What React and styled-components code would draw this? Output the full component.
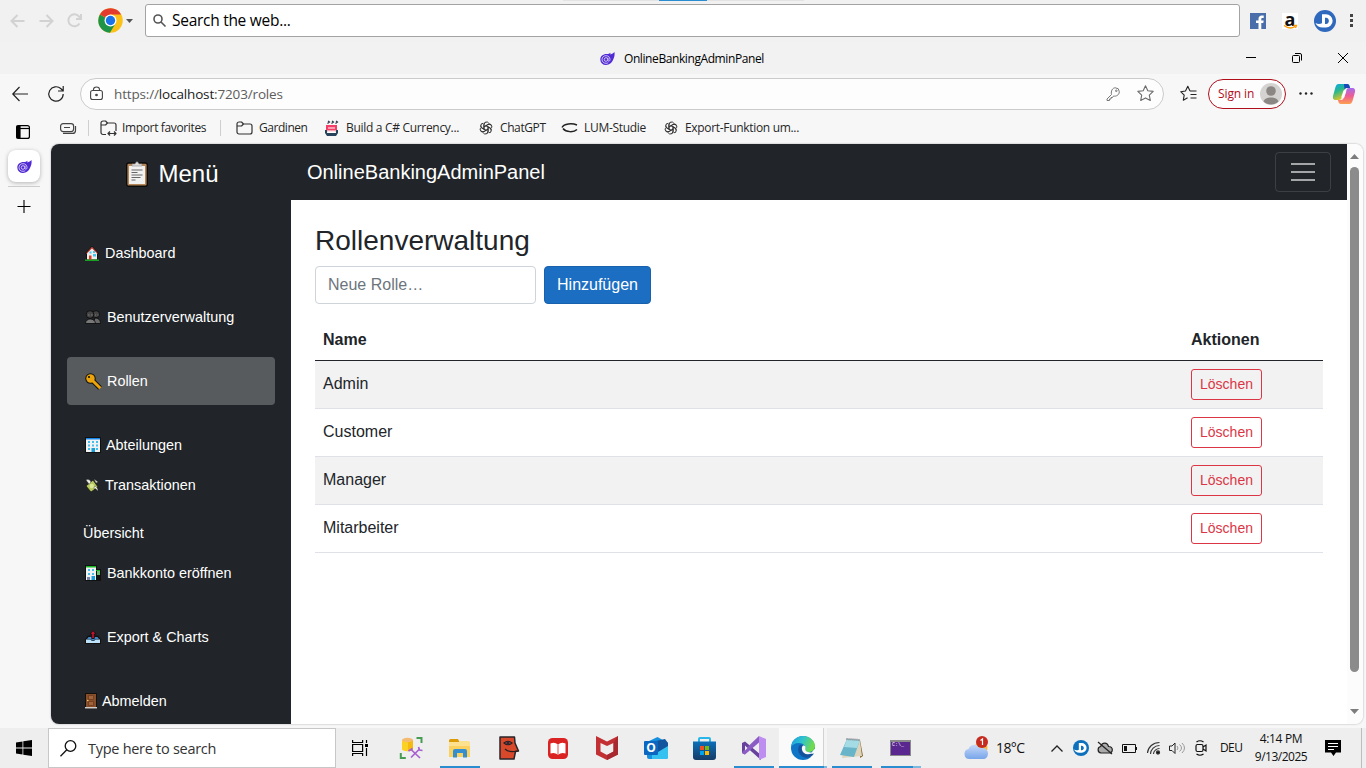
import React from "react";
import styled, { createGlobalStyle, css } from "styled-components";

const UI = '"Open Sans", "Noto Sans", sans-serif';
const WEB = '"Liberation Sans", Arial, sans-serif';

const GlobalStyle = createGlobalStyle`
  *, *::before, *::after { box-sizing: border-box; }
  html, body { margin: 0; padding: 0; overflow: hidden; }
  svg { display: block; flex: none; overflow: visible; }
`;

const Screen = styled.div`
  width: 1366px;
  height: 768px;
  display: flex;
  flex-direction: column;
  overflow: hidden;
  background: #f7f7f7;
  font-family: ${UI};
  color: #1b1b1b;
`;

const Label = styled.span`
  display: block;
  flex: none;
  white-space: nowrap;
  width: ${(p) => (p.$w ? `${p.$w}px` : "auto")};
  margin-left: ${(p) => p.$ml || 0}px;
  font-size: ${(p) => p.$size || 12}px;
  letter-spacing: ${(p) => p.$ls || 0}px;
  color: ${(p) => p.$color || "inherit"};
  line-height: 20px;
`;

const TrayText = styled(Label)`
  align-self: center;
`;

const Slot = styled.div`
  flex: none;
  width: ${(p) => p.$w}px;
  height: 100%;
  display: flex;
  align-items: center;
  justify-content: center;
`;

const Spacer = styled.div`
  flex: 1;
`;

/* Search toolbar */

const SearchToolbar = styled.header`
  position: relative;
  flex: none;
  height: 42px;
  display: flex;
  align-items: center;
  padding: 0 0 1px 4px;
  background: #f1f1f1;
`;

const DockHandle = styled.div`
  position: absolute;
  left: 563px;
  top: 0;
  width: 241px;
  height: 1px;
  background: linear-gradient(90deg, #e3e3e3 96px, #2a8dcf 96px, #2a8dcf 144px, #e3e3e3 144px);
`;

const EngineSlot = styled.div`
  flex: none;
  width: 47px;
  padding-left: 10px;
  display: flex;
  align-items: center;
  gap: 3px;
`;

const WebSearch = styled.div`
  flex: none;
  width: 1095px;
  height: 33px;
  margin-left: 10px;
  padding: 0 0 1px 7px;
  display: flex;
  align-items: center;
  background: #fff;
  border: 1px solid #a3a3a3;
  border-radius: 3px;
  color: #000;
`;

/* Browser chrome */

const TitleBar = styled.div`
  flex: none;
  height: 32px;
  display: flex;
  align-items: center;
  padding-left: 600px;
  background: #f2f2f2;
  color: #000;
`;

const TitleText = styled(Label)`
  padding-top: 2px;
`;

const AddressRow = styled.div`
  flex: none;
  height: 38px;
  display: flex;
  align-items: center;
  padding: 1px 0 0 2px;
`;

const AddressField = styled.div`
  flex: none;
  width: 1084px;
  height: 32px;
  margin-left: 6px;
  padding: 0 1px 0 9px;
  display: flex;
  align-items: center;
  border: 1px solid #cbcbcb;
  border-radius: 16px;
  background: #fdfdfd;
  color: #5c5c5c;
  b { font-weight: 400; color: #1b1b1b; }
`;

const FavoritesButton = styled(Slot)`
  padding-left: 7px;
`;

const SignIn = styled.div`
  flex: none;
  width: 78px;
  height: 30px;
  margin-left: 3px;
  padding: 0 3px 0 9px;
  display: flex;
  align-items: center;
  justify-content: space-between;
  border: 1px solid #b10e1c;
  border-radius: 15px;
  background: #fdfdfd;
  color: #b10e1c;
`;

const Body = styled.div`
  flex: 1;
  min-height: 0;
  display: flex;
`;

const TabRail = styled.nav`
  flex: none;
  width: 51px;
  padding: 13px 3px 0 0;
  display: flex;
  flex-direction: column;
  align-items: center;
`;

const TabMenu = styled.div`
  padding-right: 2px;
`;

const ActiveTab = styled.div`
  width: 32px;
  height: 32px;
  margin: 11px 0 4px;
  display: flex;
  align-items: center;
  justify-content: center;
  border-radius: 8px;
  background: #fff;
  box-shadow: 0 1px 4px rgba(0, 0, 0, 0.28);
`;

const RailRule = styled.div`
  width: 32px;
  height: 1px;
  margin-bottom: 13px;
  background: #cdcdcd;
`;

const BrowserPane = styled.div`
  flex: none;
  width: 1312px;
  display: flex;
  flex-direction: column;
`;

const Favorites = styled.div`
  flex: none;
  height: 32px;
  padding-left: 9px;
  display: flex;
  align-items: center;
  color: #262626;
`;

const FavRule = styled.i`
  flex: none;
  width: 1px;
  height: 16px;
  margin: 0 ${(p) => p.$r}px 0 ${(p) => p.$l}px;
  background: #cfcfcf;
`;

const FavIcon = styled.span`
  flex: none;
  margin: 0 5px 0 ${(p) => p.$ml || 0}px;
`;

/* Web page */

const Viewport = styled.div`
  flex: none;
  height: 580px;
  display: flex;
  overflow: hidden;
  border-radius: 8px;
  background: #fff;
  box-shadow: 0 0 2px rgba(0, 0, 0, 0.35);
  font-family: ${WEB};
  color: #212529;
`;

const Sidebar = styled.aside`
  flex: none;
  width: 240px;
  padding: 0 16px;
  background: #212529;
  color: #fff;
`;

const MenuTitle = styled.div`
  height: 60px;
  margin-bottom: 25px;
  padding-left: 3px;
  display: flex;
  justify-content: center;
  align-items: center;
  gap: 10px;
  font-size: 24px;
  color: #fff;
`;

const NavItem = styled.a`
  height: ${(p) => p.$h || 48}px;
  margin-top: ${(p) => p.$mt || 0}px;
  padding-left: ${(p) => (p.$plain ? 16 : 18)}px;
  display: flex;
  align-items: center;
  gap: ${(p) => p.$gap || 6}px;
  border-radius: 4px;
  font-size: 14.4px;
  color: #fff;
  ${(p) => p.$active && css`background: rgba(255, 255, 255, 0.25);`}
`;

const Main = styled.main`
  flex: 1;
`;

const Navbar = styled.div`
  height: 56px;
  padding: 0 16px;
  display: flex;
  align-items: center;
  justify-content: space-between;
  background: #212529;
  color: #fff;
  font-size: 20px;
`;

const Toggler = styled.button`
  width: 56px;
  height: 40px;
  padding: 0;
  display: flex;
  align-items: center;
  justify-content: center;
  border: 1px solid rgba(255, 255, 255, 0.12);
  border-radius: 4px;
  background: none;
`;

const Content = styled.section`
  padding: 24px;
`;

const Heading = styled.h3`
  margin: 0 0 8px;
  font-size: 28px;
  font-weight: 400;
  line-height: 34px;
`;

const RoleForm = styled.div`
  display: flex;
  gap: 8px;
  margin-bottom: 16px;
`;

const RoleInput = styled.input`
  width: 221px;
  height: 38px;
  padding: 0 12px;
  border: 1px solid #ced4da;
  border-radius: 4px;
  font: 16px ${WEB};
  &::placeholder { color: #6c757d; opacity: 1; }
`;

const AddButton = styled.button`
  width: 107px;
  height: 38px;
  padding: 0;
  border: 1px solid #1861ac;
  border-radius: 4px;
  background: #1b6ec2;
  color: #fff;
  font: 16px ${WEB};
`;

const RoleTable = styled.div`
  width: 1008px;
`;

const RoleRow = styled.div`
  height: ${(p) => (p.$head ? 41 : 48)}px;
  display: grid;
  grid-template-columns: 868px 140px;
  align-items: center;
  padding-bottom: ${(p) => (p.$head ? 1 : 0)}px;
  border-bottom: 1px solid ${(p) => (p.$head ? "#212529" : "#dee2e6")};
  background: ${(p) => (p.$striped ? "#f2f2f2" : "#fff")};
  font-weight: ${(p) => (p.$head ? 700 : 400)};
`;

const Cell = styled.div`
  padding: 0 8px;
  font-size: 16px;
  line-height: 24px;
`;

const RoleName = styled(Cell)`
  padding-bottom: 2px;
`;

const DeleteButton = styled.button`
  display: block;
  width: 71px;
  height: 31px;
  padding: 0 0 2px;
  border: 1px solid #dc3545;
  border-radius: 3px;
  background: transparent;
  color: #dc3545;
  font: 14px ${WEB};
`;

const ScrollTrack = styled.div`
  flex: none;
  width: 16px;
  padding: 10px 1px 10px 0;
  display: flex;
  flex-direction: column;
  align-items: center;
  background: #fcfcfc;
`;

const ScrollThumb = styled.div`
  width: 9px;
  height: 505px;
  margin: 8px 0 auto;
  border-radius: 5px;
  background: #8b8b8b;
`;

/* Taskbar */

const Taskbar = styled.footer`
  flex: none;
  height: 40px;
  display: flex;
  align-items: stretch;
  background: #eeeeee;
  color: #111;
`;

const TaskSearch = styled.div`
  flex: none;
  width: 288px;
  padding-left: 11px;
  display: flex;
  align-items: center;
  gap: 11px;
  border: 1px solid #c7c7c7;
  background: #fff;
  color: #333;
`;

const SearchHint = styled(Label)`
  padding-top: 2px;
`;

const TaskButton = styled.div`
  flex: none;
  width: ${(p) => p.$w || 49}px;
  padding-right: ${(p) => p.$pr || 0}px;
  display: flex;
  align-items: center;
  justify-content: center;
  background: ${(p) => (p.$active ? "linear-gradient(90deg, #eee 1px, #fafafa 1px, #fafafa 45px, #d2d2d2 45px, #d2d2d2 46px, #f4f4f4 46px)" : "transparent")};
  position: relative;
  ${(p) => p.$running && css`
    &::after {
      content: "";
      position: absolute;
      bottom: 0;
      left: ${p.$active ? 1 : 4.5}px;
      width: ${p.$stack ? p.$stack : 40}px;
      height: 2px;
      background: ${p.$stack ? `linear-gradient(90deg, #2a8dcf ${p.$split}px, #7db9df 0)` : "#2a8dcf"};
    }
  `}
`;

const Clock = styled.div`
  flex: none;
  width: 66px;
  display: flex;
  flex-direction: column;
  align-items: center;
  padding-top: 2px;
  > span { line-height: 18px; }
`;

const DesktopEdge = styled.div`
  width: 5px;
  border-left: 1px solid #bdbdbd;
`;

/* Drawings */

const Svg = ({ w, h = w, vb, children, ...rest }) => (
  <svg width={w} height={h} viewBox={vb || `0 0 ${w} ${h}`} fill="none" {...rest}>{children}</svg>
);

const Arrow = ({ flip }) => (
  <Svg w={16} stroke="#d2d2d2" strokeWidth="2">
    <path d={flip ? "M1.5 8H14M8.5 2l6 6-6 6" : "M14.5 8H2M7.5 2l-6 6 6 6"} />
  </Svg>
);

const Chrome = () => (
  <Svg w={25} vb="0 0 48 48">
    <circle cx="24" cy="24" r="23.500" fill="#fbc116" />
    <path d="M24 24 L3.600 12.300 A23.500 23.500 0 0 0 23 47.500 L34 29.500z" fill="#1e9449" />
    <path d="M3.600 12.300A23.500 23.500 0 0 1 44.400 12.500H24L18 20z" fill="#e33b2e" />
    <circle cx="24" cy="24" r="11.500" fill="#fff" />
    <circle cx="24" cy="24" r="9" fill="#1a73e8" />
  </Svg>
);

const Facebook = () => (
  <Svg w={16}>
    <path d="M0 0h16v16H0z" fill="#4a6ea9" />
    <path d="M8.500 16v-6H6V7.500h2.500V6c0-2.300 1.200-3.500 3.300-3.500h1.900v2.600h-1.300c-.9 0-1.100.4-1.100 1.200v1.200h2.400l-.4 2.500h-2v6z" fill="#fff" />
  </Svg>
);

const AmazonTile = styled.div`
  width: 16px;
  height: 16px;
  display: flex;
  flex-direction: column;
  align-items: center;
  background: #fff;
  font: 700 18px/12px "Open Sans", sans-serif;
  color: #111;
`;

const Amazon = () => (
  <AmazonTile>
    a
    <Svg w={14} h={4}><path d="M1 .5c4 3 8 3 11 1M10.5 .5l3 0-1 2.5" stroke="#f90" strokeWidth="1.3" /></Svg>
  </AmazonTile>
);

const DBadge = ({ size, color }) => (
  <Svg w={size} vb="0 0 22 22">
    <circle cx="11" cy="11" r="11" fill={color} />
    <path d="M8 4.200h4a6.600 6.600 0 0 1 0 13.300H9C5 17.500 2.300 15.500 1.500 13c2 1.300 4.500 1.300 6.500.3z" fill="#fff" />
    <path d="M11 7.800v6.200h1c3.800 0 3.800-6.200 0-6.200z" fill={color} />
  </Svg>
);

const Blazor = () => (
  <Svg w={15} h={13}>
    <path d="M14.5 0c.4 3-.2 5.500-1.500 8-1.300 2.700-3.500 5-7 5A5.600 5.600 0 0 1 .3 7.500C.3 4.300 3 2 6.500 2c2 0 3-.3 4-1.200l-.2 1.600C12 2 13.500 1.300 14.500 0z" fill="#512bd4" />
    <path d="M8 5.500v3c.2 1.200 2 1 2-1C10 5 8.300 3.700 6 3.700A3.800 3.800 0 0 0 2 7.500C2 9.700 3.800 11.300 6 11.300c1 0 1.600-.2 2.200-.6" stroke="#d8cff7" strokeWidth=".9" />
    <circle cx="6" cy="7.500" r="1.800" stroke="#d8cff7" strokeWidth=".9" />
  </Svg>
);

const Star = ({ list }) => (
  <Svg w={17} stroke={list ? "#222" : "#6b6b6b"} strokeWidth="1.1" strokeLinejoin="round">
    {list
      ? <path d="M10 6L7.800 1.300 5.500 6 .7 6.700l3.500 3.500-.9 5 4.300-2.400M10 6h6.500M10.500 9.500h6M10.500 13h6" />
      : <path d="M8.500 .8l2.300 4.900 5.400.7-3.900 3.700 1 5.400-4.800-2.600-4.800 2.600 1-5.400L.8 6.400l5.400-.7z" />}
  </Svg>
);

const Key = () => (
  <Svg w={14} stroke="#777" strokeWidth="1">
    <path d="M5.500 7.500L1 12v1.500h2.500V12H5v-1.500h1.500L7.500 9C10 9.700 13.300 8 13.300 4.800A4 4 0 0 0 9.300.8C6.500.8 4.700 4 5.500 7.500z" strokeLinejoin="round" />
    <circle cx="10.300" cy="3.800" r=".8" />
  </Svg>
);

const Avatar = () => (
  <Svg w={22}>
    <circle cx="11" cy="11" r="11" fill="#d5d3d1" />
    <circle cx="11" cy="8" r="4.800" fill="#8b8784" />
    <path d="M3.500 18.500c1.500-5.500 13.500-5.500 15 0-4 4-11 4-15 0z" fill="#8b8784" />
  </Svg>
);

const Copilot = () => (
  <Svg w={22} h={20}>
    <defs>
      <linearGradient id="cpA" x1="0" y1="0" x2=".5" y2="1"><stop offset="0" stopColor="#0aa5f0" /><stop offset=".45" stopColor="#27b88d" /><stop offset="1" stopColor="#f5c61c" /></linearGradient>
      <linearGradient id="cpB" x1="0" y1="0" x2="0" y2="1"><stop offset="0" stopColor="#a56cf0" /><stop offset=".5" stopColor="#ee5c93" /><stop offset="1" stopColor="#fda04f" /></linearGradient>
    </defs>
    <path d="M5.500 0H14c2 0 2.500 1.500 3 4h-3c-1.800 0-2.500 1-3 3l-2 6c-.6 2-1.500 3-3 3H3c-3 0-3.600-2-2.700-5L2.500 3C3.200 1 4 0 5.500 0z" fill="url(#cpA)" />
    <path d="M11 0h3c2 0 2.500 1.500 3 4h-3c-1 0-2 .5-2.500 1.500z" fill="#1747bb" />
    <path d="M16.500 20H8c-2 0-2.500-1.500-3-4h3c1.800 0 2.500-1 3-3l2-6c.6-2 1.500-3 3-3h3c3 0 3.600 2 2.700 5l-2.200 8c-.7 2-1.500 3-3 3z" fill="url(#cpB)" />
    <path d="M10.500 6.500h3l-2.200 7H8.200z" fill="#fff" />
  </Svg>
);

const Folder = ({ arrows }) => (
  <Svg w={17} h={16} stroke="#333" strokeWidth="1.2" strokeLinejoin="round">
    <path d={arrows ? "M6 14.500H3a2 2 0 0 1-2-2V3a2 2 0 0 1 2-2h2.500l2 2H14a2 2 0 0 1 2 2v6" : "M1 4a2 2 0 0 1 2-2h2.500l2 2H14a2 2 0 0 1 2 2v6a2 2 0 0 1-2 2H3a2 2 0 0 1-2-2z"} />
    <path d={arrows ? "M1 5h4.500L7.500 3M8 13.500h8M10 11.500l-2 2 2 2M14 11.500l2 2-2 2" : "M1 6h4.500L7.500 4"} />
  </Svg>
);

const Gpt = () => (
  <Svg w={14} vb="0 0 24 24" stroke="#333" strokeWidth="1.7">
    {[0, 60, 120, 180, 240, 300].map((a) => (
      <path key={a} transform={`rotate(${a} 12 12)`} d="M8.500 14V6.300a4.500 4.500 0 0 1 8.300-2.500M8.500 10l6.500-3.800a4.500 4.500 0 0 1 5 .3" />
    ))}
  </Svg>
);

const CodeFav = () => (
  <Svg w={13} h={15}>
    <path d="M3 0l1.500 1-2 1.500M7 0l1.500 1-2 1.500M11 0l1.500 1-2 1.500" stroke="#243348" strokeWidth="1.1" />
    <path d="M1 4h11v5H1z" fill="#f33f67" />
    <path d="M3 6.500h7v1H3z" fill="#fff" />
    <path d="M1 9h11v1.500H1z" fill="#f8a0b0" />
    <path d="M0 9h2v3h9V9h2v3l-2 3H2l-2-3z" fill="#27445c" />
    <path d="M3 10.500h7V12H3z" fill="#fff" />
  </Svg>
);

const Clipboard = () => (
  <Svg w={22} h={26}>
    <rect x=".7" y="2" width="20.600" height="23.300" rx="2" fill="#b68557" stroke="#0b0b0b" strokeWidth="1.4" />
    <path d="M3 5h16v18H3z" fill="#f1f1f1" />
    <path d="M6 5V3h3q2-4.500 4 0h3v2z" fill="#ddd" stroke="#8b8b8b" strokeWidth=".6" />
    <path d="M5.500 9h11M5.500 11.500h6M5.500 14h11M5.500 16.500h9M5.500 19h4" stroke="#666" strokeWidth="1" />
  </Svg>
);

const House = () => (
  <Svg w={14} h={15}>
    <path d="M0 7.500L7 0l7 7.500-1 1V15H1V8.500z" fill="#111" />
    <path d="M2 7L7 2l5 5v6.500H2z" fill="#eee" />
    <path d="M1.500 7.500L7 1.500l5.500 6" stroke="#e14b3b" strokeWidth="1.1" />
    <path d="M8 8h3v2.500H8zM4.500 5.500h2v2h-2zM8 5h2v2H8z" fill="#42c8ee" />
    <path d="M4 9.500h2.500V14H4z" fill="#d83b1e" />
    <path d="M0 13.500h14V15H0z" fill="#18a020" />
  </Svg>
);

const People = () => (
  <Svg w={16} h={14} stroke="#080808" strokeWidth=".8">
    <path d="M8 13.500H15.500C15.500 9.500 13 8 10 8z" fill="#686868" />
    <circle cx="11" cy="4.200" r="3.500" fill="#444" />
    <circle cx="5" cy="4.500" r="3.800" fill="#444" />
    <path d="M.5 13.500C.5 7.500 10 7.500 10.500 13.500z" fill="#787878" />
    <path d="M3 5h1.500M6 5h1.500M10 5h1M12.500 5h1" stroke="#888" />
  </Svg>
);

const GoldKey = () => (
  <Svg w={17}>
    <path d="M6 6l9 9" stroke="#111" strokeWidth="5" />
    <circle cx="5.500" cy="5.500" r="5.200" fill="#111" />
    <circle cx="5.500" cy="5.500" r="4.200" fill="#eda30a" />
    <path d="M7 7l8.300 8.300" stroke="#eda30a" strokeWidth="3" />
    <circle cx="4" cy="4" r="1.100" fill="#111" />
  </Svg>
);

const Office = ({ green }) => (
  <Svg w={16}>
    <path d={green ? "M0 0h12v4h4v12H0z" : "M0 0h16v16H0z"} fill="#111" />
    <path d={green ? "M1 2h10v13H1z" : "M1 2h14v13H1z"} fill="#f2f2f2" />
    <path d={green ? "M1 1h10v1.500H1z" : "M1 1h14v1.500H1z"} fill={green ? "#16b624" : "#1585e8"} />
    <path d={green ? "M3 4h2v2H3zM7 4h2v2H7zM3 8h2v2H3zM7 8h2v2H7z" : "M3 4h2v2H3zM7 4h2v2H7zM11 4h2v2h-2zM3 7.500h2v2H3zM7 7.500h2v2H7zM11 7.500h2v2h-2zM3 11h2v2H3zM11 11h2v2h-2z"} fill="#40bff0" />
    <path d="M6.500 11h3.500v4H6.500z" fill="#189fd8" />
    {green && <><path d="M12 6h3v4h-3z" fill="#68c070" /><path d="M11 5h4v1h-4z" fill="#16b624" /><path d="M2 12h3v3H2z" fill="#7a82a8" /></>}
  </Svg>
);

const Money = () => (
  <Svg w={14} h={15}>
    <path d="M1 8l7-6 5 7-7 5z" fill="#b8c85c" stroke="#111" strokeWidth=".7" />
    <path d="M1 2c3-1 4 0 5 2L4 6.500C4 5 2 4 1 2zM13 13c0-2-1-4-3-5L8.500 10c2 0 3 1.500 4.500 3zM9 1l4 3-2 1z" fill="#f2f2e7" stroke="#333" strokeWidth=".4" />
    <circle cx="6.800" cy="8" r="2.200" fill="#dbe996" />
  </Svg>
);

const Outbox = () => (
  <Svg w={16} h={14}>
    <path d="M0 14V9.500l3-4h10l3 4V14z" fill="#111" />
    <path d="M1 9.500h4.500L7 11h2l1.500-1.500H15V13H1z" fill="#bde2f8" />
    <path d="M2 9l1.500-2h9L14 9l-4 .3-1 1.200H7L6 9.300z" fill="#3d86c8" />
    <path d="M8 .5L11 4H9.300v4.500H6.700V4H5z" fill="#c3122c" stroke="#111" strokeWidth=".9" />
  </Svg>
);

const Door = () => (
  <Svg w={12} h={16}>
    <path d="M0 0h12v16H0z" fill="#16100c" />
    <path d="M1 1h10v13H1z" fill="#894f2b" />
    <path d="M3.500 2.500h5v4h-5zM3.500 8.500h5v4h-5z" fill="#a0633c" stroke="#67391d" strokeWidth=".7" />
    <path d="M0 14h12v1.500H0z" fill="#ccc" />
    <circle cx="2.800" cy="7.500" r=".8" fill="#f8ce59" />
  </Svg>
);

const WindowsLogo = () => (
  <Svg w={16}><path d="M0 2.400l6.500-1v6.200H0zM7.300 1.200L16 0v7.600H7.300zM0 8.400h6.500v6.200l-6.500-1zM7.300 8.400H16V16l-8.700-1.200z" fill="#000" /></Svg>
);

const DevTools = () => (
  <Svg w={22} h={22}>
    <path d="M16.500 1h5v5M.8 16v5h5" stroke="#469c53" strokeWidth="2" />
    <path d="M2 3v9c0 3 11 3 11 0V3z" fill="#fcd125" />
    <path d="M8 3h5v9c0 1-2 2-5 2z" fill="#f6b90d" />
    <ellipse cx="7.500" cy="3" rx="5.500" ry="2.200" fill="#f3ba72" />
    <path d="M11 20.500l8-8M11 12.500l9 8.500M8.500 14l4-2.500M18.500 10l1 3 3 .5" stroke="#a85fd0" strokeWidth="1.7" />
  </Svg>
);

const Explorer = () => (
  <Svg w={22} h={19}>
    <path d="M0 1.500Q0 0 1.500 0H9l1.500 3H0z" fill="#dc9c08" />
    <path d="M0 3h20q1 0 1 1v14H0z" fill="#fbd160" />
    <path d="M0 3h10l1-1h9l1 2v3H0z" fill="#fde18e" />
    <path d="M4 18.500V12q0-2 2-2h10q2 0 2 2v6.500h-4V14H8v4.500z" fill="#348ed0" />
  </Svg>
);

const FaceApp = () => (
  <Svg w={20} h={24}>
    <path d="M1 1h14.500l.5 6 3.500 8-3 .5-1.500 7.500H1z" fill="#d8492c" stroke="#28252a" strokeWidth="1.5" strokeLinejoin="round" />
    <path d="M5 7q4-3.500 8 0-4 3.500-8 0zM6 13q4 4 12 2" stroke="#271f22" strokeWidth="1.2" />
    <circle cx="9" cy="7" r="1.600" fill="#242c40" />
  </Svg>
);

const BookApp = () => (
  <Svg w={20} h={21}>
    <rect width="20" height="21" rx="4.500" fill="#db2222" />
    <path d="M2.500 5.500q4-2 7.500 1 3.500-3 7.500-1v10q-4-1.500-7.500 1.300Q6.500 14 2.500 15.500z" fill="#fff" />
    <path d="M10 6.500v10" stroke="#db2222" strokeWidth=".8" />
  </Svg>
);

const Shield = () => (
  <Svg w={22} h={24}>
    <path d="M0 0l11 5.500L22 0v18.500L11 24 0 18.500zM4.500 7v8.500L11 19l6.500-3.500V7L11 10z" fill="#c33034" fillRule="evenodd" />
    <path d="M22 0v18.500L11 24v-5l6.500-3.500V7z" fill="#a82830" />
  </Svg>
);

const OutlookTile = styled.b`
  position: absolute;
  left: 13px;
  top: 13px;
  width: 14px;
  height: 14px;
  border-radius: 1px;
  background: #0c67c1;
  color: #fff;
  font: 700 12px/14px "Open Sans", sans-serif;
  text-align: center;
`;

const Outlook = () => (
  <>
    <Svg w={24} h={22}>
      <path d="M3 5L13.500 0 24 6v14q0 2-2 2H5q-2 0-2-2z" fill="#1490df" />
      <path d="M24 8L8 18v4h14q2 0 2-2z" fill="#35c2f1" />
      <path d="M12 4l9-2 3 4v3l-10 6z" fill="#12549e" />
    </Svg>
    <OutlookTile>O</OutlookTile>
  </>
);

const Store = () => (
  <Svg w={23} h={23}>
    <defs><linearGradient id="storeG" x1="0" y1="0" x2="0" y2="1"><stop offset="0" stopColor="#0c6fb9" /><stop offset="1" stopColor="#173b67" /></linearGradient></defs>
    <path d="M6 6V2q0-1 1-1h9q1 0 1 1v4" stroke="#29b6ea" strokeWidth="2" />
    <path d="M0 4.500h23V20q0 3-3 3H3q-3 0-3-3z" fill="url(#storeG)" />
    <path d="M7 9h4v4H7z" fill="#f25022" /><path d="M12 9h4v4h-4z" fill="#7fba00" />
    <path d="M7 14h4v4H7z" fill="#00a4ef" /><path d="M12 14h4v4h-4z" fill="#ffb900" />
  </Svg>
);

const VisualStudio = () => (
  <Svg w={24}>
    <path d="M0 7l3-1.500L19 19v5L5.500 12 3 14.500v4L0 17z" fill="#68419d" />
    <path d="M17 0v6.500L3 18.500 0 17v-.8z" fill="#8b5cc4" />
    <path d="M17 0l7 3v18l-7 3z" fill="#bd8df0" />
    <path d="M3 9.500v5L5.500 12zM17 7.500v9L11.500 12z" fill="#eee" />
  </Svg>
);

const EdgeLogo = () => (
  <Svg w={24}>
    <defs>
      <linearGradient id="edgeG" x1="0" y1="0" x2="1" y2=".3"><stop offset="0" stopColor="#1b9de0" /><stop offset=".5" stopColor="#2fc3cf" /><stop offset="1" stopColor="#71db4c" /></linearGradient>
    </defs>
    <circle cx="12" cy="12" r="12" fill="#0f75c7" />
    <path d="M24.500 12v8l-5 1 2-6z" fill="#fafafa" />
    <path d="M0 11C1 4 6 0 12 0c7 0 12 5 12 10 0 4-3 6-7 6-3 0-4-1-3-2.500C16 10 12 7 8 7c-4 0-7 2-8 4z" fill="url(#edgeG)" />
    <path d="M8 10c-3 6 3 14 11 11 2-.8 3-2 4-3.500C17 19 11 16 11 12c0-1 .5-2 1-2.500C11 8.500 9 8.500 8 10z" fill="#14529b" />
    <path d="M14.500 12c.5-1.500-.8-3-2.500-2.500-2.500 2-1 9 5 8.700 3 0 5-1 6-2.500-4 1.700-10 .3-8.500-3.700z" fill="#fafafa" />
  </Svg>
);

const Notepad = () => (
  <Svg w={24} h={22}>
    <path d="M20 3l3 16-3 2z" fill="#82642f" />
    <path d="M7 3l13 1 2 15-20 2z" fill="#ddd4bb" />
    <path d="M7 2l13 1-6 17-14-2z" fill="#68b5c9" />
    <path d="M7 2l13 1-3 8-13-1z" fill="#a4dbe5" />
    <path d="M6.500 2l13.500 1" stroke="#777" strokeWidth="2" strokeDasharray="1 1" />
  </Svg>
);

const ConsoleWindow = styled.div`
  width: 21px;
  height: 16px;
  padding-left: 1px;
  border: 1px solid #8a8a8a;
  border-top-width: 2px;
  background: #59278f;
  color: #fff;
  font: 5px/6px "Liberation Mono", monospace;
`;

const Weather = () => (
  <Svg w={25} h={24}>
    <defs><linearGradient id="cloudG" x1="0" y1="0" x2="0" y2="1"><stop offset="0" stopColor="#c7daf8" /><stop offset="1" stopColor="#78a5ea" /></linearGradient></defs>
    <circle cx="17" cy="12" r="6.500" fill="#f9bb3d" />
    <path d="M5.500 23a5 5 0 0 1-1-9.900C6 8 13 7 15.500 12c4-1 8.500 1 8.500 5.500 0 3.500-2 5.500-5 5.500z" fill="url(#cloudG)" />
    <circle cx="18" cy="6" r="6" fill="#c62b1f" />
    <path d="M16.500 4.500L18.500 3v6" stroke="#fff" strokeWidth="1.2" />
  </Svg>
);

/* Sections */

const WebToolbar = () => (
  <SearchToolbar>
    <DockHandle />
    <Slot $w={28}><Arrow /></Slot>
    <Slot $w={28}><Arrow flip /></Slot>
    <Slot $w={28}>
      <Svg w={15} stroke="#d2d2d2" strokeWidth="2"><path d="M12.500 10.500A6 6 0 1 1 12 3.500l1.500 2M14 1v5H9" /></Svg>
    </Slot>
    <EngineSlot>
      <Chrome />
      <Svg w={7} h={4}><path d="M0 0h7L3.500 4z" fill="#555" /></Svg>
    </EngineSlot>
    <WebSearch>
      <Svg w={13} stroke="#555" strokeWidth="1.6"><circle cx="5" cy="5" r="4" /><path d="M8 8l4.500 4.500" /></Svg>
      <Label $size={15.5} $ml={6} $ls={-0.28}>Search the web...</Label>
    </WebSearch>
    <Slot $w={36}><Facebook /></Slot>
    <Slot $w={28}><Amazon /></Slot>
    <Slot $w={41}><DBadge size={22} color="#2f69bd" /></Slot>
    <Slot $w={13}><Svg w={3} h={13}><path d="M0 0h3v3H0zM0 5h3v3H0zM0 10h3v3H0z" fill="#444" /></Svg></Slot>
  </SearchToolbar>
);

const WindowTitle = () => (
  <TitleBar>
    <Blazor />
    <TitleText $ml={9} $ls={-0.41}>OnlineBankingAdminPanel</TitleText>
    <Spacer />
    <Slot $w={46}><Svg w={10} h={2}><path d="M0 0h10v1H0z" fill="#000" /></Svg></Slot>
    <Slot $w={46}>
      <Svg w={10} stroke="#000"><rect x=".5" y="2.500" width="7" height="7" rx="1" /><path d="M3 .5h5a1.500 1.500 0 0 1 1.500 1.500v5.500" /></Svg>
    </Slot>
    <Slot $w={46}><Svg w={10} stroke="#000"><path d="M0 0l10 10M10 0L0 10" /></Svg></Slot>
  </TitleBar>
);

const AddressBar = () => (
  <AddressRow>
    <Slot $w={36}><Svg w={16} stroke="#222" strokeWidth="1.2"><path d="M16 8H1M7.500 1L.8 8l6.700 7" /></Svg></Slot>
    <Slot $w={36}><Svg w={16} stroke="#222" strokeWidth="1.2"><path d="M15.200 8A7.200 7.200 0 1 1 13 2.800l1.800 1.800M15.200 0v5H10" /></Svg></Slot>
    <AddressField>
      <Svg w={13} h={15} stroke="#444" strokeWidth="1.1"><rect x=".6" y="4.500" width="11.800" height="9" rx="2" /><path d="M3.500 4.500V3.500a3 2.500 0 0 1 6 0V4.500" /><circle cx="6.500" cy="9" r=".8" fill="#444" /></Svg>
      <Label $ml={11} $size={13.5} $ls={-0.15}>https://<b>localhost</b>:7203/roles</Label>
      <Spacer />
      <Slot $w={30}><Key /></Slot>
      <Slot $w={34}><Star /></Slot>
    </AddressField>
    <FavoritesButton $w={41}><Star list /></FavoritesButton>
    <SignIn><Label $ls={-0.1}>Sign in</Label><Avatar /></SignIn>
    <Slot $w={40}><Svg w={14} h={3}><circle cx="1.500" cy="1.500" r="1.200" fill="#222" /><circle cx="7" cy="1.500" r="1.200" fill="#222" /><circle cx="12.500" cy="1.500" r="1.200" fill="#222" /></Svg></Slot>
    <Slot $w={36}><Copilot /></Slot>
  </AddressRow>
);

const FavoritesBar = () => (
  <Favorites>
    <Svg w={16} h={11} stroke="#444" strokeWidth="1.2"><rect x=".6" y=".6" width="13" height="8" rx="2.500" /><path d="M4 4.500h6M3 10.400h9.500c2 0 3-1 3-3V3" /></Svg>
    <FavRule $l={12} $r={11} />
    <FavIcon><Folder arrows /></FavIcon>
    <Label $w={85} $ls={-0.36}>Import favorites</Label>
    <FavRule $l={13} $r={15} />
    <FavIcon><Folder /></FavIcon>
    <Label $w={66} $ml={1} $ls={-0.45}>Gardinen</Label>
    <FavIcon><CodeFav /></FavIcon>
    <Label $w={131} $ml={3} $ls={-0.31}>Build a C# Currency...</Label>
    <FavIcon $ml={2}><Gpt /></FavIcon>
    <Label $w={62} $ml={2} $ls={-0.4}>ChatGPT</Label>
    <FavIcon><Svg w={16} h={10} stroke="#222" strokeWidth="1.5"><path d="M0 4.500C2 .5 10 0 15 2M1 5.500c3 4 11 4 14 1" /></Svg></FavIcon>
    <Label $w={80} $ml={1} $ls={-0.3}>LUM-Studie</Label>
    <FavIcon><Gpt /></FavIcon>
    <Label $ml={2} $ls={-0.32}>Export-Funktion um...</Label>
  </Favorites>
);

const SideMenu = () => (
  <Sidebar>
    <MenuTitle><Clipboard />Menü</MenuTitle>
    <NavItem><House />Dashboard</NavItem>
    <NavItem $mt={16}><People />Benutzerverwaltung</NavItem>
    <NavItem $mt={16} $active $gap={5}><GoldKey />Rollen</NavItem>
    <NavItem $mt={16} $gap={5}><Office />Abteilungen</NavItem>
    <NavItem $h={32}><Money />Transaktionen</NavItem>
    <NavItem $mt={8} $plain>Übersicht</NavItem>
    <NavItem $h={32}><Office green />Bankkonto eröffnen</NavItem>
    <NavItem $mt={24}><Outbox />Export &amp; Charts</NavItem>
    <NavItem $mt={16} $gap={5}><Door />Abmelden</NavItem>
  </Sidebar>
);

const roles = ["Admin", "Customer", "Manager", "Mitarbeiter"];

const RolesPage = () => (
  <Main>
    <Navbar>
      OnlineBankingAdminPanel
      <Toggler><Svg w={24} h={18} stroke="#a3a5a7" strokeWidth="2"><path d="M0 1h24M0 9h24M0 17h24" /></Svg></Toggler>
    </Navbar>
    <Content>
      <Heading>Rollenverwaltung</Heading>
      <RoleForm>
        <RoleInput placeholder="Neue Rolle…" />
        <AddButton>Hinzufügen</AddButton>
      </RoleForm>
      <RoleTable>
        <RoleRow $head><Cell>Name</Cell><Cell>Aktionen</Cell></RoleRow>
        {roles.map((role, i) => (
          <RoleRow key={role} $striped={i % 2 === 0}>
            <RoleName>{role}</RoleName>
            <Cell><DeleteButton>Löschen</DeleteButton></Cell>
          </RoleRow>
        ))}
      </RoleTable>
    </Content>
  </Main>
);

const BottomBar = () => (
  <Taskbar>
    <Slot $w={48}><WindowsLogo /></Slot>
    <TaskSearch>
      <Svg w={17} stroke="#111" strokeWidth="1.3"><circle cx="10.500" cy="6" r="5.300" /><path d="M6.800 9.800L.5 16.300" /></Svg>
      <SearchHint $size={14.5} $ls={-0.28}>Type here to search</SearchHint>
    </TaskSearch>
    <TaskButton $w={50} $pr={2}><Svg w={16} stroke="#000" strokeWidth="1.2"><path d="M.6 0v2.500h10V0M.6 16v-2.500h10V16M.6 4.500h10v7H.6zM14.500 0v3M14.500 8v8" /><path d="M13 4h3v3h-3z" fill="#000" stroke="none" /></Svg></TaskButton>
    <TaskButton><DevTools /></TaskButton>
    <TaskButton $running><Explorer /></TaskButton>
    <TaskButton><FaceApp /></TaskButton>
    <TaskButton><BookApp /></TaskButton>
    <TaskButton><Shield /></TaskButton>
    <TaskButton><Outlook /></TaskButton>
    <TaskButton><Store /></TaskButton>
    <TaskButton $running><VisualStudio /></TaskButton>
    <TaskButton $running $active $stack={48} $split={45}><EdgeLogo /></TaskButton>
    <TaskButton $running><Notepad /></TaskButton>
    <TaskButton $running $stack={40} $split={32}><ConsoleWindow>C:\_</ConsoleWindow></TaskButton>
    <Spacer />
    <Slot $w={25}><Weather /></Slot>
    <TrayText $size={14} $ml={7} $w={48} $ls={-0.6}>18°C</TrayText>
    <Slot $w={25}><Svg w={12} h={7} stroke="#222" strokeWidth="1.3"><path d="M.5 6.500L6 1l5.500 5.500" /></Svg></Slot>
    <Slot $w={24}><DBadge size={16} color="#0d70bd" /></Slot>
    <Slot $w={24}><Svg w={16} h={12} stroke="#222" strokeWidth="1.2"><path d="M4 11a3.300 3.300 0 0 1-.3-6.500C5 0 10.500 0 11.500 4.500c5 0 5 6.500.5 6.500z" fill="#aaa" /><path d="M1 0l14 12" /></Svg></Slot>
    <Slot $w={24}><Svg w={15} h={9} stroke="#111"><path d="M.5 .5h13v8H.5zM14.500 3v3" /><path d="M2 2h3v5H2z" fill="#111" stroke="none" /></Svg></Slot>
    <Slot $w={24}><Svg w={13} h={12} stroke="#333" strokeWidth="1.1"><path d="M.5 11C1 5 6 .5 12.500 .5M3.500 12C3.500 7.500 7.500 3.500 12.500 3.500M6.500 12c0-3 3-5.500 6-5.500" /><circle cx="11" cy="10.500" r="1.600" fill="#111" /></Svg></Slot>
    <Slot $w={24}><Svg w={16} h={12} stroke="#222"><path d="M.5 4h2.500L6 1v10.500L3 8.500H.5z" /><path d="M8 4q2 2 0 4M10.500 2.500q4 3.500 0 7M13 1q5 5 0 10" stroke="#999" /></Svg></Slot>
    <Slot $w={24}><Svg w={12} h={16} stroke="#111" strokeWidth="1.2"><rect x="1" y="4.500" width="7" height="7" rx="1.500" /><path d="M8 7l3-2v6L8 9M1.500 2q3.500-2.500 7 0M1.500 14q3.500 2.500 7 0" /></Svg></Slot>
    <TrayText $ml={7} $w={28} $ls={-0.6}>DEU</TrayText>
    <Clock><Label $ls={-0.35}>4:14 PM</Label><Label $ls={-0.5}>9/13/2025</Label></Clock>
    <Slot $w={38}><Svg w={16} h={16}><path d="M0 0h16v12.500H11L8.500 16 6 12.500H0z" fill="#000" /><path d="M3 3.500h10M3 6.500h10M3 9.500h6" stroke="#fff" /></Svg></Slot>
    <Slot $w={9} />
    <DesktopEdge />
  </Taskbar>
);

export default function App() {
  return (
    <>
      <GlobalStyle />
      <Screen>
        <WebToolbar />
        <WindowTitle />
        <AddressBar />
        <Body>
          <TabRail>
            <TabMenu>
              <Svg w={14} stroke="#000" strokeWidth="1.2"><rect x=".6" y=".6" width="12.800" height="12.800" rx="2" /><path d="M.6 3.500h12.800" /><path d="M1 1h3v12H1z" fill="#000" /></Svg>
            </TabMenu>
            <ActiveTab><Blazor /></ActiveTab>
            <RailRule />
            <Svg w={13} stroke="#000" strokeWidth="1.1"><path d="M6 0v13M-.5 6.500h13" /></Svg>
          </TabRail>
          <BrowserPane>
            <FavoritesBar />
            <Viewport>
              <SideMenu />
              <RolesPage />
              <ScrollTrack>
                <Svg w={9} h={5}><path d="M0 5h9L4.500 0z" fill="#7d7d7d" /></Svg>
                <ScrollThumb />
                <Svg w={9} h={5}><path d="M0 0h9L4.500 5z" fill="#7d7d7d" /></Svg>
              </ScrollTrack>
            </Viewport>
          </BrowserPane>
        </Body>
        <BottomBar />
      </Screen>
    </>
  );
}
